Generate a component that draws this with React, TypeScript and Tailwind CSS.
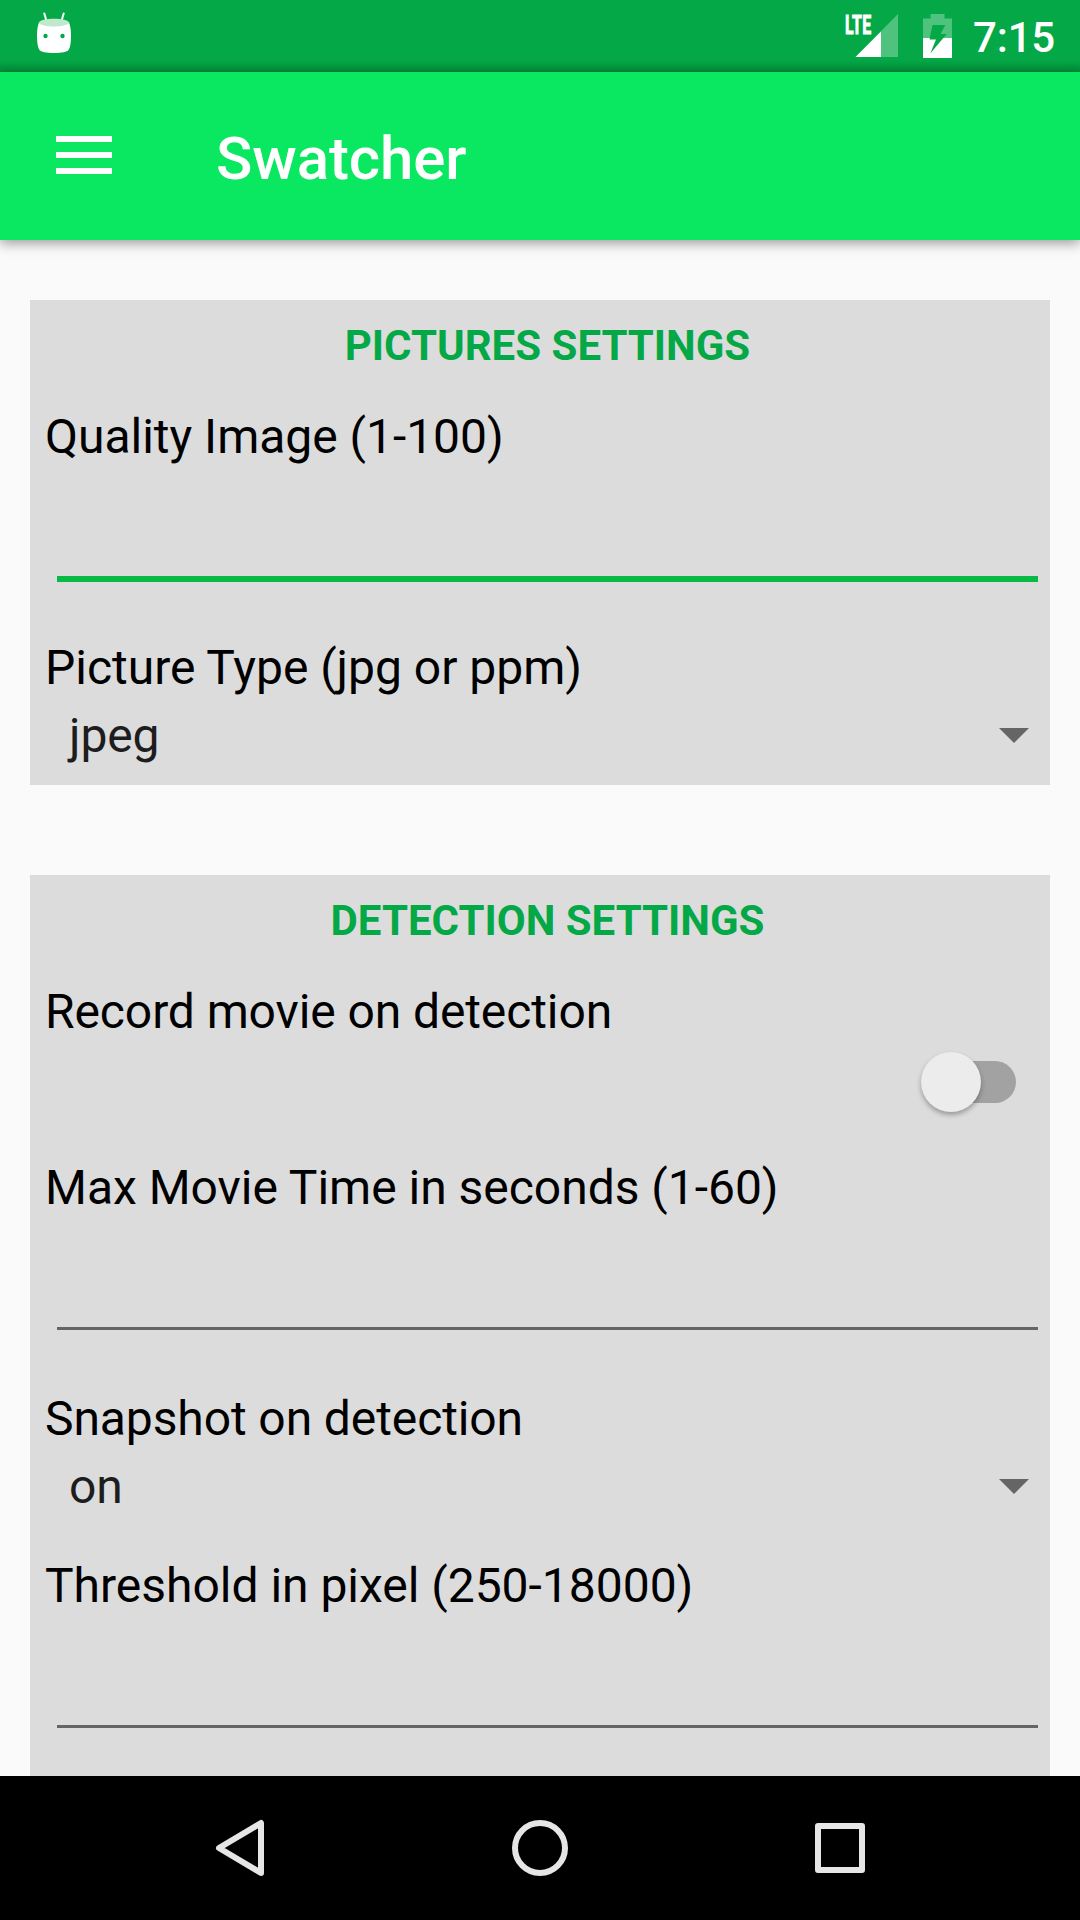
import React from "react";

function StatusBar() {
  return (
    <div className="relative flex h-[72px] items-start bg-[#04a846] font-medium text-white">
      <svg className="ml-[36px] mt-[12px] h-[42px] w-[36px]" viewBox="36 12 36 42">
        <path d="M44.3 13.5l2.2 7.5M63.7 13.5l-2.2 7.5" stroke="#fff" strokeWidth="2" strokeLinecap="round" />
        <path d="M39.5 22C38 24 37 29 37 36s1 12 2.5 14c1.5 2 6.500 3 14.500 3s13-1 14.500-3C70 48 71 43 71 36s-1-12-2.500-14z" fill="#fff" />
        <path d="M38.500 23C40 20 46 18.700 54 18.700S68 20 69.500 23C67 25.200 61 26.500 54 26.500S41 25.200 38.500 23z" fill="#bfe8cd" />
        <circle cx="45.500" cy="36" r="2.200" fill="#04a846" />
        <circle cx="62.500" cy="36" r="2.200" fill="#04a846" />
      </svg>
      <div className="relative ml-auto mr-[25px] mt-[14px] h-[44px] w-[53px]">
        <svg className="size-full" viewBox="845 14 53 44">
          <path d="M898 14V57H855.500z" fill="#fff" fillOpacity=".3" />
          <path d="M881 31.500V57H855.500z" fill="#fff" />
        </svg>
        <span className="absolute left-0 top-0 origin-left scale-x-[0.61] text-[26px] leading-[22px] font-bold tracking-[0.5px] [-webkit-text-stroke:1px_white]">LTE</span>
      </div>
      <svg className="mt-[14px] h-[44px] w-[29px]" viewBox="923 14 29 44">
        <path fillRule="evenodd" d="M930.500 14h14v4.500h7.500V38h-29V18.500h7.500zM932.500 25h12.800l-4.800 9h6.200l-3.400 4h-13.500z" fill="#fff" fillOpacity=".3" />
        <path fillRule="evenodd" d="M923 38h29v20h-29zM929.800 38l-.3 1.500h6.500l-5.700 14L943.300 38z" fill="#fff" />
      </svg>
      <span className="ml-[21px] mr-[25px] mt-[13px] text-[42px] leading-[50px] tracking-[-0.2px]">7:15</span>
      <div className="absolute inset-x-0 bottom-0 h-3 bg-linear-to-t from-black/15 to-transparent" />
    </div>
  );
}

function AppBar() {
  return (
    <header className="relative z-10 flex h-[168px] items-center bg-[#09e860] shadow-[0_3px_12px_rgba(0,0,0,0.4)]">
      <button className="ml-14 mb-[2px] flex w-14 flex-col gap-[10px]" aria-label="Menu">
        <span className="h-[6px] w-full bg-white" />
        <span className="h-[6px] w-full bg-white" />
        <span className="h-[6px] w-full bg-white" />
      </button>
      <h1 className="ml-[104px] mt-[5px] text-[60px] leading-[70px] font-medium tracking-[-0.1px] text-white">Swatcher</h1>
    </header>
  );
}

function Label({ children, tight = false }: { children: React.ReactNode; tight?: boolean }) {
  return (
    <div className={`h-16 pl-[15px] text-[48px] leading-[64px] text-black ${tight ? "tracking-[-0.1px]" : "tracking-[-0.02px]"}`}>
      {children}
    </div>
  );
}

function Heading({ children }: { children: React.ReactNode }) {
  return <h2 className="pl-[15px] text-center text-[42px] leading-[56px] font-bold text-[#04a846]">{children}</h2>;
}

function Field({ focused = false }: { focused?: boolean }) {
  return (
    <div className="flex h-[135px] flex-col pl-[27px] pr-3 pt-[107px]">
      <div className={focused ? "h-[6px] bg-[#07b945]" : "h-[3px] bg-[#656565]"} />
    </div>
  );
}

function Select({ value }: { value: string }) {
  return (
    <div className="flex h-[72px] items-start justify-between pl-[39px] pr-[21px]">
      <span className="mt-1 text-[48px] leading-[64px] tracking-[-0.1px] text-[#1d1d1d]">{value}</span>
      <svg className="mt-7 h-[15px] w-[30px]" viewBox="0 0 30 15">
        <path d="M0 0h30L15 15z" fill="#656565" />
      </svg>
    </div>
  );
}

function Switch() {
  return (
    <div className="flex h-[81px] items-start justify-end pr-[34px] pt-[17px]">
      <div className="relative h-[42px] w-[84px] rounded-full bg-[#a2a2a2]">
        <div className="absolute -left-[11.5px] -top-[9px] size-[60px] rounded-full bg-[#ececec] shadow-[0_3px_5px_rgba(0,0,0,0.3)]" />
      </div>
    </div>
  );
}

export default function App() {
  return (
    <div className="flex h-[1920px] w-[1080px] flex-col overflow-hidden bg-[#fafafa] font-[Roboto,sans-serif]">
      <StatusBar />
      <AppBar />
      <main className="flex min-h-0 flex-1 flex-col gap-[90px] overflow-hidden px-[30px] pt-[60px]">
        <section className="h-[485px] shrink-0 bg-[#dcdcdc] pt-[18px]">
          <Heading>PICTURES SETTINGS</Heading>
          <div className="mt-[31px]"><Label>Quality Image (1-100)</Label></div>
          <Field focused />
          <div className="mt-[32px]"><Label>Picture Type (jpg or ppm)</Label></div>
          <Select value="jpeg" />
        </section>
        <section className="h-[1000px] shrink-0 bg-[#dcdcdc] pt-[18px]">
          <Heading>DETECTION SETTINGS</Heading>
          <div className="mt-[31px]"><Label tight>Record movie on detection</Label></div>
          <Switch />
          <div className="mt-[31px]"><Label>Max Movie Time in seconds (1-60)</Label></div>
          <Field />
          <div className="mt-[32px]"><Label tight>Snapshot on detection</Label></div>
          <Select value="on" />
          <div className="mt-[31px]"><Label>Threshold in pixel (250-18000)</Label></div>
          <Field />
        </section>
      </main>
      <nav className="flex h-36 shrink-0 items-center bg-black">
        <svg className="ml-[215px] h-[60px] w-[52px]" viewBox="215 1818 52 60" fill="none" stroke="#e6e6e6" strokeWidth="6" strokeLinejoin="round">
          <path d="M261 1823V1873L219 1848z" />
        </svg>
        <svg className="ml-[243px] size-[60px]" viewBox="0 0 60 60" fill="none" stroke="#e6e6e6" strokeWidth="6">
          <circle cx="30" cy="30" r="25" />
        </svg>
        <svg className="ml-[240px] size-[60px]" viewBox="0 0 60 60" fill="none" stroke="#e6e6e6" strokeWidth="6" strokeLinejoin="round">
          <path d="M8 8h44v44H8z" />
        </svg>
      </nav>
    </div>
  );
}
